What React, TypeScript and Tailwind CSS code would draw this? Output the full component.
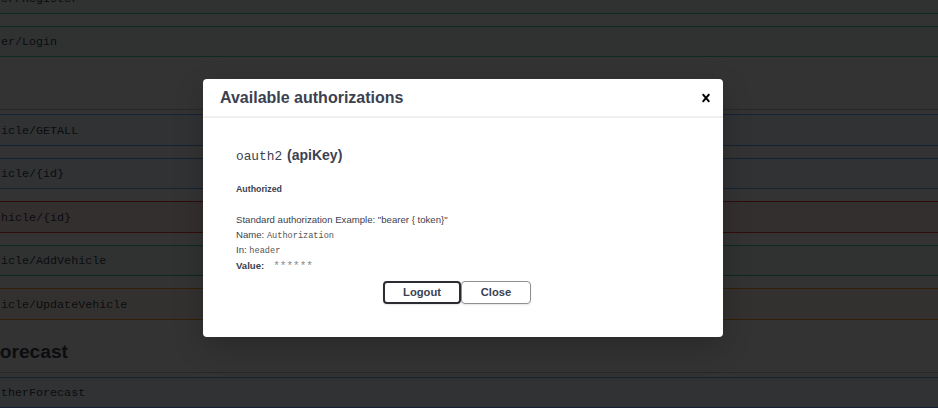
type Method = 'post' | 'get' | 'delete' | 'put'

const methodStyles: Record<Method, string> = {
  post: 'border-[#49cc90] bg-[#49cc90]/10',
  get: 'border-[#61affe] bg-[#61affe]/10',
  delete: 'border-[#f93e3e] bg-[#f93e3e]/10',
  put: 'border-[#fca130] bg-[#fca130]/10',
}

const sans = "font-['Liberation_Sans',Arial,sans-serif]"
const mono = "font-['Liberation_Mono','Courier_New',monospace]"

// rows run past both edges of the window, so only top and bottom borders show
function OpBlock({ method, path }: { method: Method; path: string }) {
  return (
    <div
      className={`flex h-[31.5px] items-center border-y pt-[4px] ${methodStyles[method]} ${mono} text-[11.7px] text-[#3b4151]`}
    >
      <span className="pl-[1px]">{path}</span>
    </div>
  )
}

function TagHeader({ children }: { children?: React.ReactNode }) {
  return (
    <div
      className={`flex h-[53px] items-end border-b border-[#3b4151]/30 pb-[8px] ${sans} text-[19.2px] font-bold leading-[24px] text-[#3b4151]`}
    >
      {children}
    </div>
  )
}

function CloseIcon() {
  return (
    <svg width="16" height="16" viewBox="0 0 20 20" className="fill-black">
      <path d="M14.348 14.849c-.469.469-1.229.469-1.697 0L10 11.819l-2.651 3.029c-.469.469-1.229.469-1.697 0-.469-.469-.469-1.229 0-1.697l2.758-3.15-2.759-3.152c-.469-.469-.469-1.228 0-1.697.469-.469 1.228-.469 1.697 0L10 8.183l2.651-3.031c.469-.469 1.228-.469 1.697 0 .469.469.469 1.229 0 1.697l-2.758 3.152 2.758 3.15c.469.469.469 1.229 0 1.698z" />
    </svg>
  )
}

function AuthModal() {
  return (
    <div
      className={`absolute left-[203px] top-[79px] w-[520px] rounded-[4px] bg-white shadow-[0_10px_30px_rgba(0,0,0,0.2)] ${sans} text-[#3b4151]`}
    >
      {/* header */}
      <div className="flex h-[39px] items-center justify-between border-b-2 border-[#efefef] pl-[17px] pr-[9px]">
        <h3 className="text-[16px] font-bold">Available authorizations</h3>
        <button className="flex items-center">
          <CloseIcon />
        </button>
      </div>

      {/* body */}
      <div className="flex flex-col pl-[33px] pt-[27px] pb-[33px]">
        <h4 className="flex items-baseline gap-[5px] leading-[20px]">
          <code className={`${mono} text-[12.8px]`}>oauth2</code>
          <span className="text-[14px] font-semibold">(apiKey)</span>
        </h4>

        <h6 className="mt-[16px] text-[8.8px] font-semibold leading-[12px]">Authorized</h6>

        <div className="mt-[17px] flex flex-col text-[9.6px] leading-[15px]">
          <p>Standard authorization Example: "bearer {'{'} token{'}'}"</p>
          <p>
            Name: <code className={`${mono} text-[8.6px] leading-none text-[#555]`}>Authorization</code>
          </p>
          <p>
            In: <code className={`${mono} text-[8.6px] leading-none text-[#555]`}>header</code>
          </p>
          <p className="mt-[1px] flex h-[15px] items-baseline">
            <label className="font-bold">Value:</label>
            <code className={`ml-[9px] ${mono} text-[11px] leading-none text-[#8a8a8a]`}>******</code>
          </p>
        </div>

        <div className="mt-[8px] flex justify-center pr-[45px]">
          <button className="h-[23px] w-[78px] rounded-[4px] border-2 border-[#2b2d33] text-[11.2px] font-semibold leading-none shadow-[0_1px_2px_rgba(0,0,0,0.1)]">
            Logout
          </button>
          <button className="h-[23px] w-[70px] rounded-[4px] border-[1.5px] border-[#8f8f8f] text-[11.2px] font-semibold leading-none shadow-[0_1px_2px_rgba(0,0,0,0.1)]">
            Close
          </button>
        </div>
      </div>
    </div>
  )
}

export default function App() {
  return (
    <div className="relative h-screen w-full overflow-hidden bg-white">
      {/* page under the dialog */}
      <div className="-mt-[18px] flex flex-col">
        <div className="flex flex-col gap-[12px]">
          <OpBlock method="post" path="er/Register" />
          <OpBlock method="post" path="er/Login" />
        </div>

        <TagHeader />
        <div className="flex flex-col gap-[12px] pt-[4px]">
          <OpBlock method="get" path="icle/GETALL" />
          <OpBlock method="get" path="icle/{id}" />
          <OpBlock method="delete" path="hicle/{id}" />
          <OpBlock method="post" path="icle/AddVehicle" />
          <OpBlock method="put" path="icle/UpdateVehicle" />
        </div>

        <TagHeader>
          <span className="-ml-[12px]">Forecast</span>
        </TagHeader>
        <div className="flex flex-col gap-[12px] pt-[4px]">
          <OpBlock method="get" path="therForecast" />
        </div>
      </div>

      {/* backdrop */}
      <div className="absolute inset-0 bg-black/80" />

      <AuthModal />
    </div>
  )
}
